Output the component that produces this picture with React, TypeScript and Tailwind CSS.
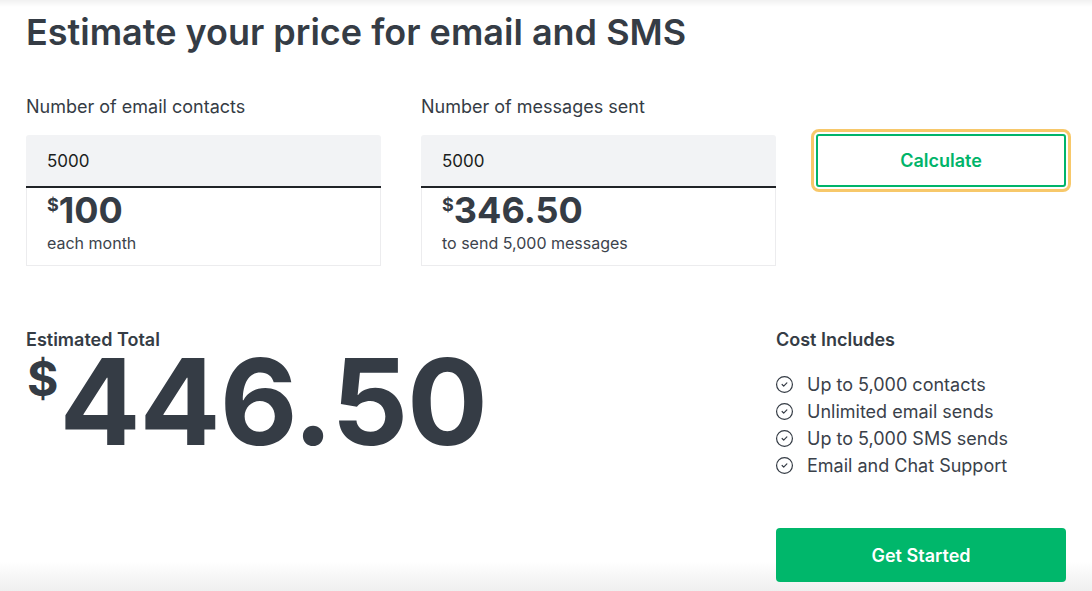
import { CircleCheck } from "lucide-react";

const includes = [
  "Up to 5,000 contacts",
  "Unlimited email sends",
  "Up to 5,000 SMS sends",
  "Email and Chat Support",
];

function PriceField({
  label,
  value,
  amount,
  note,
}: {
  label: string;
  value: string;
  amount: string;
  note: string;
}) {
  return (
    <div className="flex flex-col">
      <label className="text-[18px] leading-6 text-[#353c45]">{label}</label>
      <input
        readOnly
        value={value}
        className="mt-4 h-[53px] w-full rounded-t-[3px] border-b-2 border-[#202327] bg-[#f2f3f5] px-[21px] text-[17px] text-[#1b1d20] outline-none"
      />
      <div className="h-[78px] border border-t-0 border-[#ececee] px-5 pt-[2px]">
        <div className="flex items-start font-bold text-[#353c45]">
          <span className="mt-[6px] text-[18px] leading-none">$</span>
          <span className="text-[36px] leading-[40px]">{amount}</span>
        </div>
        <p className="mt-[3px] text-[16px] leading-5 text-[#3c434c]">{note}</p>
      </div>
    </div>
  );
}

export default function App() {
  return (
    <div
      className="min-h-[591px] w-full bg-[linear-gradient(to_bottom,#f1f1f1_0px,#ffffff_7px,#ffffff_calc(100%-30px),#efefef_100%)] px-[26px] pt-[10px] text-[#353c45]"
      style={{ fontFamily: "Inter, 'Noto Sans', Arial, sans-serif" }}
    >
      <h1 className="text-[36px] font-semibold leading-[44px] text-[#353c45]">
        Estimate your price for email and SMS
      </h1>

      <div className="mt-[41px] grid grid-cols-[355px_355px_250px] gap-x-10">
        <PriceField label="Number of email contacts" value="5000" amount="100" note="each month" />
        <PriceField
          label="Number of messages sent"
          value="5000"
          amount="346.50"
          note="to send 5,000 messages"
        />
        <div className="pt-[39px]">
          <button className="h-[53px] w-full rounded-[3px] border-2 border-[#00b46a] bg-white text-[18px] font-semibold text-[#00b46a] outline-[3px] outline-offset-[2px] outline-[#f7c86a] outline-solid">
            Calculate
          </button>
        </div>
      </div>

      <div className="mt-[62px] flex justify-between">
        <div>
          <p className="text-[18px] font-semibold leading-6">Estimated Total</p>
          <div className="flex items-start font-bold text-[#353c45]">
            <span className="ml-[1px] mt-[2px] text-[48px] leading-[50px]">$</span>
            <span className="ml-[1px] text-[120px] leading-[100px] tracking-[-1px]">446.50</span>
          </div>
        </div>

        <div className="w-[290px]">
          <p className="text-[18px] font-semibold leading-6">Cost Includes</p>
          <ul className="mt-[19px] flex flex-col">
            {includes.map((item) => (
              <li key={item} className="flex items-center gap-[13px] text-[18px] leading-[27px] text-[#3a414a]">
                <CircleCheck size={19} strokeWidth={1.5} className="-ml-[1px] text-[#353c45]" />
                {item}
              </li>
            ))}
          </ul>
          <button className="mt-[49px] h-[54px] w-full rounded-[4px] bg-[#00b76b] text-[18px] font-semibold text-white">
            Get Started
          </button>
        </div>
      </div>
    </div>
  );
}
